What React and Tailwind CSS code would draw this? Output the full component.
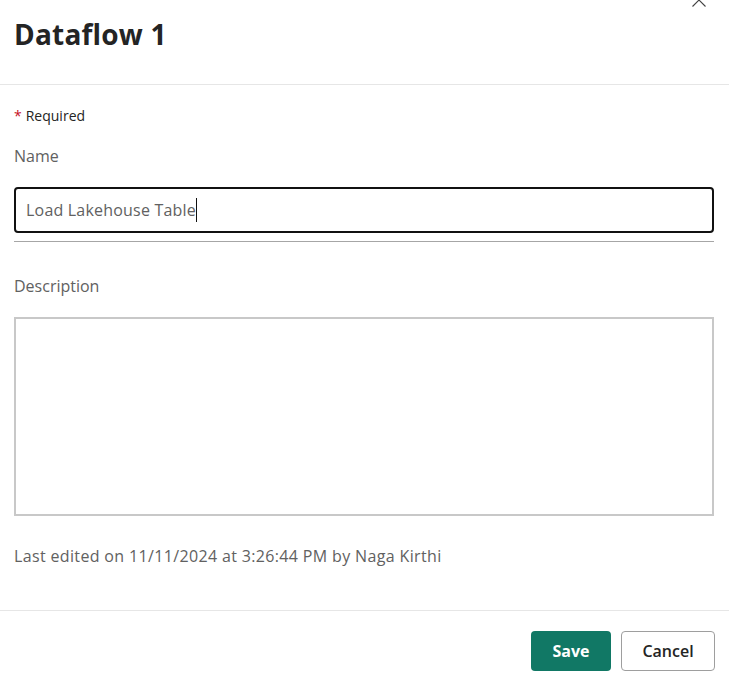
import { useState } from "react";

const font = { fontFamily: '"Open Sans", "Noto Sans", sans-serif' };

function CloseIcon() {
    return (
        <svg width="16" height="16" viewBox="0 0 16 16" className="absolute left-[691px] top-[-8px]">
            <path d="M1.5 1.5 L14.5 14.5 M14.5 1.5 L1.5 14.5" stroke="#424242" strokeWidth="1.1" fill="none" />
        </svg>
    );
}

export default function App() {
    const [name] = useState("Load Lakehouse Table");

    return (
        <div className="relative w-[729px] h-[687px] bg-white overflow-hidden" style={font}>
            <CloseIcon />

            {/* Header */}
            <div className="h-[85px] border-b border-[#e6e6e6] px-[14px] pt-[16px]">
                <h1 className="text-[28px] leading-[36px] font-bold text-[#242424] tracking-[0.2px]">Dataflow 1</h1>
            </div>

            {/* Body */}
            <div className="px-[14px] h-[525px]">
                <div className="pt-[21px] text-[14px] leading-[20px] text-[#242424]">
                    <span className="text-[#c50f1f] mr-[4px]">*</span>Required
                </div>

                <label className="block mt-[18px] text-[16px] leading-[24px] text-[#616161]">Name</label>
                <div className="mt-[19px] h-[46px] w-[700px] rounded-[4px] border-2 border-[#111] flex items-center px-[10px] text-[16px] text-[#616161]">
                    <span className="tracking-[0.2px]">{name}</span>
                    <span className="inline-block w-px h-[24px] bg-[#111]" />
                </div>
                <div className="mt-[8px] h-px w-[700px] bg-[#a6a6a6]" />

                <label className="block mt-[32px] text-[16px] leading-[24px] text-[#616161]">Description</label>
                <div className="mt-[19px] h-[199px] w-[700px] border-2 border-[#c8c8c8]" />

                <p className="mt-[28px] text-[16px] leading-[24px] text-[#616161] tracking-[0.35px]">
                    Last edited on 11/11/2024 at 3:26:44 PM by Naga Kirthi
                </p>
            </div>

            {/* Footer */}
            <div className="border-t border-[#e6e6e6] flex justify-end gap-[10px] pr-[14px] pt-[20px]">
                <button className="w-[80px] h-[40px] rounded-[4px] bg-[#117865] text-white text-[16px] font-bold">Save</button>
                <button className="w-[94px] h-[40px] rounded-[4px] border border-[#9e9e9e] bg-white text-[#242424] text-[16px] font-semibold">Cancel</button>
            </div>
        </div>
    );
}
